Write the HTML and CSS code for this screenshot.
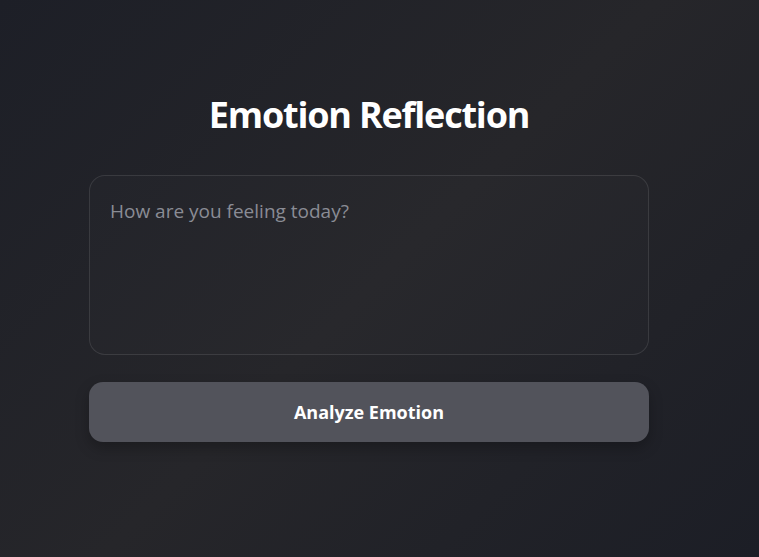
FILE: index.html
```html
<!DOCTYPE html>
<html lang="en">
<head>
<meta charset="utf-8">
<title>Emotion Reflection</title>
<link rel="stylesheet" href="styles.css">
</head>
<body>
<main class="page">
  <section class="card">
    <h1 class="title">Emotion Reflection</h1>
    <textarea class="entry" placeholder="How are you feeling today?"></textarea>
    <button class="analyze" type="button">Analyze Emotion</button>
  </section>
</main>
</body>
</html>
```
FILE: styles.css
```css
* { box-sizing: border-box; }
html, body { margin: 0; height: 100%; }
body {
  font-family: "Open Sans", "Noto Sans", sans-serif;
  background: linear-gradient(135deg, #1d1f27 0%, #26262a 50%, #1c1e26 100%);
  color: #fff;
}
.page {
  min-height: 100%;
  display: flex;
  justify-content: center;
  padding: 89px 21px 0 0;
}
.card {
  width: 560px;
  display: flex;
  flex-direction: column;
  align-items: stretch;
}
.title {
  margin: 0 0 34px;
  text-align: center;
  font-size: 36px;
  font-weight: 700;
  line-height: 52px;
  letter-spacing: -1.2px;
}
.entry {
  display: block;
  width: 100%;
  height: 180px;
  resize: none;
  border: 1px solid rgba(255,255,255,0.1);
  border-radius: 16px;
  background: rgba(255,255,255,0.01);
  color: #fff;
  padding: 21px 20px;
  font-family: inherit;
  font-size: 19px;
  line-height: 28px;
  outline: none;
}
.entry::placeholder { color: #8a8c95; }
.analyze {
  margin-top: 27px;
  height: 60px;
  border: none;
  border-radius: 14px;
  background: #52535b;
  color: #fff;
  font-family: inherit;
  font-size: 18px;
  font-weight: 700;
  box-shadow: 0 6px 14px rgba(0,0,0,0.25);
}
```
